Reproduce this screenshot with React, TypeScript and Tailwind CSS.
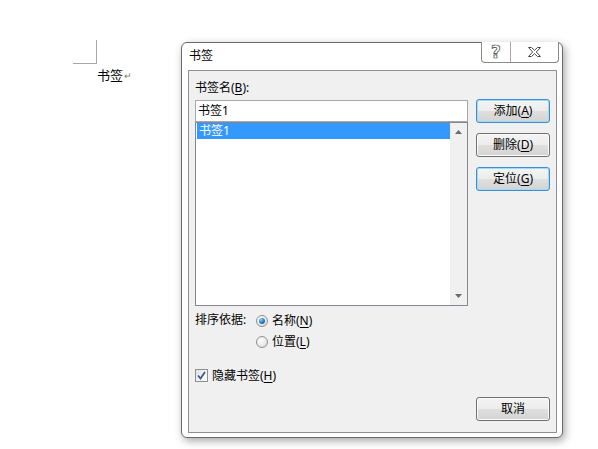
import React from "react";

function Acc({ children }: { children: React.ReactNode }) {
  return <span className="underline underline-offset-2">{children}</span>;
}

function DlgButton({
  label,
  accel,
  primary,
}: {
  label: string;
  accel?: string;
  primary?: boolean;
}) {
  return (
    <div
      className={
        "flex h-[24px] w-[74px] items-center justify-center rounded-[3px] border bg-[linear-gradient(to_bottom,#f4f4f4_0%,#ececec_50%,#dfdfdf_51%,#d3d3d3_100%)] text-[12px] leading-none text-black " +
        (primary
          ? "border-[#3c8fcf] shadow-[inset_0_0_0_1px_#9fdaf8]"
          : "border-[#707070] shadow-[inset_0_0_0_1px_#fbfbfb]")
      }
    >
      {label}
      {accel && (
        <>
          (<Acc>{accel}</Acc>)
        </>
      )}
    </div>
  );
}

function Radio({ checked }: { checked?: boolean }) {
  return (
    <div className="flex h-[12px] w-[12px] items-center justify-center rounded-full border border-[#8e8f8f] bg-[radial-gradient(circle_at_40%_35%,#ffffff_0%,#e8e8e8_60%,#cfcfcf_100%)]">
      {checked && (
        <div className="h-[6px] w-[6px] rounded-full bg-[radial-gradient(circle_at_35%_30%,#8fd0ff_0%,#2a7cc8_50%,#114b80_100%)]" />
      )}
    </div>
  );
}

function Arrow({ up }: { up?: boolean }) {
  return (
    <svg width="7" height="4" viewBox="0 0 7 4">
      <polygon points={up ? "3.5,0 7,4 0,4" : "0,0 7,0 3.5,4"} fill="#6a6a6a" />
    </svg>
  );
}

export default function App() {
  return (
    <div className="flex h-[449px] w-[598px] overflow-hidden bg-white font-['Noto_Sans','Noto_Sans_CJK_SC',sans-serif] text-black">
      {/* document page */}
      <div className="w-[181px] shrink-0 pt-[40px]">
        <div className="ml-[73px] h-[24px] w-[24px] border-b border-r border-[#a8a8a8]" />
        <div className="ml-[97px] mt-px flex items-center text-[13px] leading-[20px] font-['Noto_Sans_CJK_SC',sans-serif]">
          书签
          <span className="ml-px text-[9px] leading-none text-[#7a7a7a]">↵</span>
        </div>
      </div>

      {/* bookmark dialog */}
      <div className="mt-[42px] flex h-[396px] w-[382px] shrink-0 flex-col rounded-[6px] border border-[#6a6a6a] bg-white shadow-[2px_3px_9px_rgba(0,0,0,0.35)]">
        <div className="flex h-[27px] items-start justify-between pr-[3px]">
          <div className="pl-[7px] pt-[5px] text-[12px] leading-[16px]">书签</div>
          <div className="-mt-px flex h-[21px] rounded-b-[4px] border border-t-0 border-[#8a8a8a] bg-white">
            <div className="flex w-[29px] items-center justify-center border-r border-[#a8a8a8]">
              <span className="font-['DejaVu_Sans',sans-serif] text-[17px] font-bold leading-none text-white [-webkit-text-stroke:0.7px_#3a3a3a]">
                ?
              </span>
            </div>
            <div className="flex w-[47px] items-center justify-center">
              <svg width="13" height="10" viewBox="0 0 13 10">
                <polygon
                  points="0.5,0.5 3.5,0.5 6.5,3.3 9.5,0.5 12.5,0.5 8.3,5 12.5,9.5 9.5,9.5 6.5,6.7 3.5,9.5 0.5,9.5 4.7,5"
                  fill="#ffffff"
                  stroke="#4a4a4a"
                  strokeWidth="1"
                  strokeLinejoin="round"
                />
              </svg>
            </div>
          </div>
        </div>

        <div className="mx-[5px] ml-[6px] flex h-[363px] flex-col border border-[#8e8f8f] bg-[#f0f0f0] px-[6px] pt-[9px] text-[12px]">
          <div className="flex items-start">
            <div className="flex w-[273px] flex-col">
              <div className="leading-[16px]">
                书签名(<Acc>B</Acc>):
              </div>
              <div className="mt-[4px] flex h-[22px] items-center border border-[#a5a8ad] bg-white pl-[2px] leading-none">
                书签1
              </div>
              <div className="flex h-[184px] border border-[#828790] bg-white">
                <div className="flex-1 pl-px">
                  <div className="flex h-[16px] items-center bg-[#3399ff] pl-[2px] leading-none text-white">
                    书签1
                  </div>
                </div>
                <div className="flex w-[17px] flex-col items-center justify-between bg-[#f0f0f0] py-[7px]">
                  <Arrow up />
                  <Arrow />
                </div>
              </div>

              <div className="mt-[4px] flex">
                <div className="w-[61px] pt-[2px] leading-[16px]">排序依据:</div>
                <div className="flex flex-col">
                  <div className="flex h-[21px] items-center gap-[4px]">
                    <Radio checked />
                    <span>
                      名称(<Acc>N</Acc>)
                    </span>
                  </div>
                  <div className="flex h-[21px] items-center gap-[4px]">
                    <Radio />
                    <span>
                      位置(<Acc>L</Acc>)
                    </span>
                  </div>
                </div>
              </div>

              <div className="mt-[13px] flex h-[21px] items-center gap-[4px]">
                <div className="flex h-[13px] w-[13px] items-center justify-center border border-[#8e8f8f] bg-[linear-gradient(135deg,#e2e2e2,#ffffff)]">
                  <svg width="9" height="9" viewBox="0 0 9 9">
                    <path
                      d="M1 4.5 L3.5 7.5 L8 1"
                      fill="none"
                      stroke="#3f5796"
                      strokeWidth="1.8"
                    />
                  </svg>
                </div>
                <span>
                  隐藏书签(<Acc>H</Acc>)
                </span>
              </div>
            </div>

            <div className="ml-[8px] mt-[19px] flex flex-col gap-[10px]">
              <DlgButton label="添加" accel="A" primary />
              <DlgButton label="删除" accel="D" />
              <DlgButton label="定位" accel="G" primary />
            </div>
          </div>

          <div className="mt-[11px] flex justify-end">
            <DlgButton label="取消" />
          </div>
        </div>
      </div>
    </div>
  );
}
